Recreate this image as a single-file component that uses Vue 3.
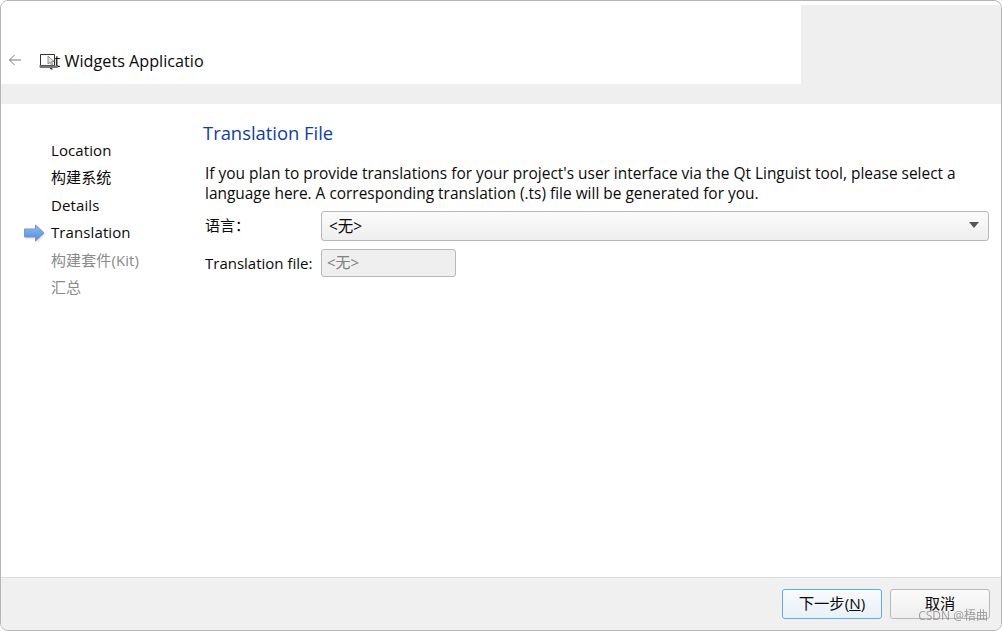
<script setup>
const steps = [
  { label: 'Location' },
  { label: '构建系统' },
  { label: 'Details' },
  { label: 'Translation', current: true },
  { label: '构建套件(Kit)', muted: true },
  { label: '汇总', muted: true }
]
</script>

<template>
  <div class="window">
    <header class="head">
      <div class="titlebar">
        <svg class="back" width="14" height="12" viewBox="0 0 14 12" fill="none" stroke="#777" stroke-width="1">
          <path d="M13 6H1.5M6.5 1 1.5 6l5 5" />
        </svg>
        <span class="title-wrap">
          <span class="title">Qt Widgets Applicatio</span>
          <svg class="app-icon" width="20" height="16" viewBox="0 0 20 16">
            <path d="M1.5 1.5h14v11h-14z" fill="#fff" stroke="#333" stroke-width="1" />
            <path d="M0 12.5h19.5l-1 2.5H1z" fill="#777" />
            <path d="M9 3l6 5.5-2.4.2 1.3 3-1.4.6-1.3-3-2.2 1.6z" fill="#e4e4e4" stroke="#777" stroke-width=".8" />
          </svg>
        </span>
      </div>
      <div class="head-side"></div>
    </header>
    <div class="band"></div>

    <main class="body">
      <nav class="steps">
        <div v-for="s in steps" :key="s.label" class="step" :class="{ muted: s.muted }">
          <svg v-if="s.current" class="arrow" width="21" height="18" viewBox="0 0 21 18">
            <defs>
              <linearGradient id="arrowFill" x1="0" y1="0" x2="0" y2="1">
                <stop offset="0" stop-color="#8fbdf5" />
                <stop offset="1" stop-color="#4a8de0" />
              </linearGradient>
            </defs>
            <path d="M.5 5h11V1l8.5 8-8.5 8v-4H.5z" fill="url(#arrowFill)" stroke="#8197b5" stroke-width="1" />
          </svg>
          {{ s.label }}
        </div>
      </nav>

      <section class="page">
        <h1 class="page-title">Translation File</h1>
        <p class="intro">If you plan to provide translations for your project's user interface via the Qt Linguist tool, please select a language here. A corresponding translation (.ts) file will be generated for you.</p>
        <div class="form">
          <label class="lbl">语言：</label>
          <div class="combo">
            <span class="combo-text">&lt;无&gt;</span>
            <svg width="10" height="6" viewBox="0 0 10 6"><path d="M0 0h10L5 6z" fill="#555" /></svg>
          </div>
          <label class="lbl file-lbl">Translation file:</label>
          <div class="file-input">&lt;无&gt;</div>
        </div>
      </section>
    </main>

    <footer class="foot">
      <button class="btn primary">下一步(<u>N</u>)</button>
      <button class="btn">取消</button>
      <span class="watermark">CSDN @梧曲</span>
    </footer>
  </div>
</template>

<style>
html, body { margin: 0; background: #fff; }
</style>

<style scoped>
.window {
  position: relative;
  box-sizing: border-box;
  width: 1002px;
  height: 631px;
  display: flex;
  flex-direction: column;
  background: #fff;
  border: 1px solid #b5b5b5;
  border-radius: 8px;
  overflow: hidden;
  font-family: "Open Sans", "Noto Sans CJK SC", sans-serif;
  font-size: 15px;
  color: #0a0a0a;
}
.head { display: flex; height: 83px; flex: none; }
.titlebar {
  width: 800px;
  display: flex;
  align-items: flex-end;
  padding: 0 0 12px 7px;
  box-sizing: border-box;
  background: #fff;
}
.back { margin-bottom: 6px; }
.title-wrap { position: relative; margin-left: 17px; display: block; }
.app-icon { position: absolute; left: 0; top: 3px; }
.title { font-size: 16.2px; display: block; line-height: 22px; padding-left: 3px; white-space: nowrap; }
.head-side { flex: 1; background: #efefef; margin-top: 4px; }
.band { height: 20px; flex: none; background: #efefef; }
.body { flex: 1; display: flex; min-height: 0; }
.steps { width: 202px; flex: none; padding: 33px 0 0 50px; box-sizing: border-box; }
.step { position: relative; height: 27.4px; line-height: 27.4px; font-size: 15px; letter-spacing: .1px; white-space: nowrap; }
.step.muted { color: #8a8a8a; }
.arrow { position: absolute; left: -27px; top: 5px; filter: drop-shadow(1px 1px 1px rgba(0, 0, 0, .15)); }
.page { flex: 1; min-width: 0; padding-right: 12px; }
.page-title {
  margin: 17px 0 0;
  font-size: 18.4px;
  line-height: 24px;
  font-weight: 400;
  color: #0f3da0;
}
.intro {
  margin: 18px 0 0 2px;
  font-size: 15.44px;
  line-height: 20px;
  width: 780px;
}
.form {
  display: grid;
  grid-template-columns: 116px 1fr;
  grid-template-rows: 30px 28px;
  row-gap: 8px;
  margin: 8px 0 0 2px;
  align-items: center;
  font-size: 15px;
}
.lbl { line-height: 20px; margin-top: -2px; }
.file-lbl { margin-top: 0; }
.combo {
  box-sizing: border-box;
  height: 30px;
  display: flex;
  align-items: center;
  justify-content: space-between;
  padding: 0 9px 2px 7px;
  border: 1px solid #b8b8b8;
  border-radius: 3px;
  background: linear-gradient(#fbfbfb, #eeeeee);
}
.combo-text { font-size: 15.5px; }
.file-input {
  box-sizing: border-box;
  width: 135px;
  height: 28px;
  line-height: 25px;
  padding-left: 5px;
  border: 1px solid #b8b8b8;
  border-radius: 3px;
  background: #efefef;
  color: #808080;
}
.foot {
  flex: none;
  height: 53px;
  box-sizing: border-box;
  background: #f0f0f0;
  border-top: 1px solid #dcdcdc;
  display: flex;
  justify-content: flex-end;
  align-items: flex-start;
  gap: 8px;
  padding: 11px 11px 0 0;
}
.btn {
  box-sizing: border-box;
  width: 100px;
  height: 30px;
  padding: 0 0 2px;
  border: 1px solid #b8b8b8;
  border-radius: 3px;
  background: linear-gradient(#fbfbfb, #eeeeee);
  font: inherit;
  font-size: 15.3px;
  line-height: 22px;
  color: #0a0a0a;
}
.btn.primary { border-color: #5aaef0; background: linear-gradient(#f8fbfe, #e8f0f7); }
.watermark {
  position: absolute;
  right: 13px;
  bottom: 6px;
  font-size: 12px;
  color: #8a8a8a;
  opacity: .8;
}
</style>
